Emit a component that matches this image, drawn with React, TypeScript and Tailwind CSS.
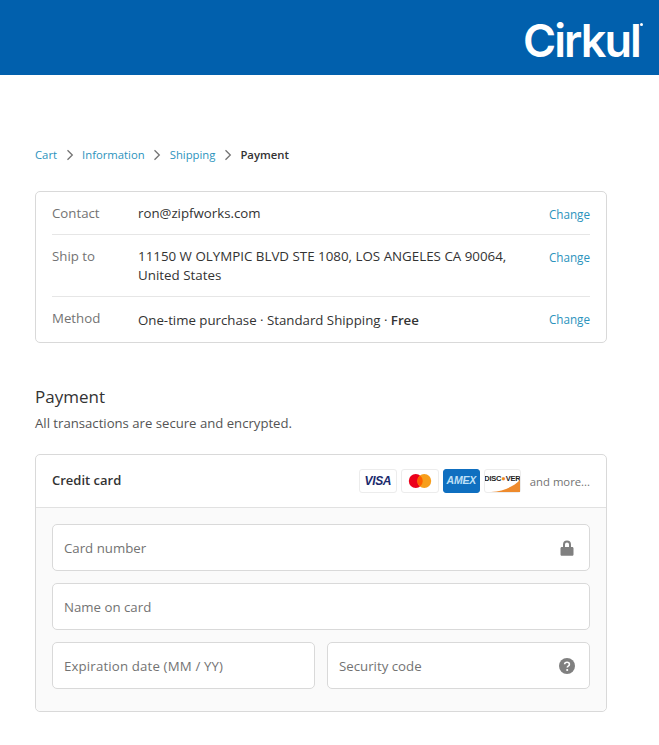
import React from "react";

function Chevron() {
  return (
    <svg width="10" height="12" viewBox="0 0 10 12" className="mx-[7.5px] shrink-0 text-[#737373]" fill="none" stroke="currentColor" strokeWidth="1.3">
      <path d="M2.5 1.2 7.3 6 2.5 10.8" />
    </svg>
  );
}

function Row({ label, children, className = "", labelClass = "", linkClass = "" }: { label: string; children: React.ReactNode; className?: string; labelClass?: string; linkClass?: string }) {
  return (
    <div className={`flex items-start ${className}`}>
      <div className={`w-[86px] shrink-0 leading-[19px] text-[#737373] ${labelClass}`}>{label}</div>
      <div className="flex-1 leading-[19px] text-[#333333]">{children}</div>
      <a className={`ml-3 text-[11.7px] leading-[19px] text-[#2b93bd] ${linkClass}`}>Change</a>
    </div>
  );
}

function Field({ label, icon, className = "", labelClass = "" }: { label: string; icon?: React.ReactNode; className?: string; labelClass?: string }) {
  return (
    <div className={`flex h-[47px] items-center justify-between rounded-[5px] border border-[#d9d9d9] bg-white pl-[11px] pr-[14px] text-[#737373] ${className}`}>
      <span className={`pt-[2px] ${labelClass}`}>{label}</span>
      {icon}
    </div>
  );
}

function Badge({ className = "", children }: { className?: string; children: React.ReactNode }) {
  return <div className={`flex h-6 w-[38px] items-center justify-center overflow-hidden rounded-[3px] border border-[#ececec] bg-white ${className}`}>{children}</div>;
}

export default function App() {
  return (
    <div className="h-[745px] w-[659px] overflow-hidden bg-white text-[13.25px] font-['Open_Sans','Noto_Sans',sans-serif] text-[#333333]">
      <header className="flex h-[75px] items-center justify-end bg-[#0160ad] pr-[19px] pt-[6px]">
        <span className="relative font-['Inter',sans-serif] text-[45px] font-semibold leading-none tracking-[-1.9px] text-white">
          Cirkul
          <span className="absolute right-[-3px] top-[5px] h-[3px] w-[3px] rounded-full bg-white" />
        </span>
      </header>

      <main className="ml-[35px] w-[572px]">
        <nav className="mt-[72px] flex h-4 items-center text-[11.3px]">
          <a className="text-[#2b93bd]">Cart</a>
          <Chevron />
          <a className="text-[#2b93bd]">Information</a>
          <Chevron />
          <a className="text-[#2b93bd]">Shipping</a>
          <Chevron />
          <span className="font-semibold text-[#333333]">Payment</span>
        </nav>

        <section className="mt-[28px] rounded-[5px] border border-[#d9d9d9] px-4">
          <Row label="Contact" className="h-[42px] pt-[12px]" linkClass="mt-[1px]">ron@zipfworks.com</Row>
          <Row label="Ship to" className="h-[62px] border-t border-[#e6e6e6] pt-[12px]" linkClass="mt-[1px]">
            <span className="text-[13.35px]">
              11150 W OLYMPIC BLVD STE 1080, LOS ANGELES CA 90064,
              <br />
              United States
            </span>
          </Row>
          <Row label="Method" className="h-[46px] border-t border-[#e6e6e6] pt-[14px]" labelClass="-mt-[2px]" linkClass="-mt-[1px]">
            One-time purchase · Standard Shipping · <b className="font-semibold">Free</b>
          </Row>
        </section>

        <h2 className="mt-[42px] text-[17px] leading-[24px] text-[#333333]">Payment</h2>
        <p className="mt-[5px] text-[13.15px] leading-[18px] text-[#545454]">All transactions are secure and encrypted.</p>

        <section className="mt-[22px] rounded-[5px] border border-[#d9d9d9]">
          <div className="flex h-[52px] items-center justify-between px-4">
            <span className="text-[13px] font-semibold text-[#333333]">Credit card</span>
            <div className="flex items-center gap-[4px]">
              <Badge>
                <span className="font-['Liberation_Sans',sans-serif] text-[12px] font-bold italic tracking-[-0.3px] text-[#1a2a6c]">VISA</span>
              </Badge>
              <Badge>
                <svg width="26" height="16" viewBox="0 0 24 15">
                  <circle cx="8" cy="7.5" r="6.5" fill="#eb001b" />
                  <circle cx="16" cy="7.5" r="6.5" fill="#f79e1b" />
                  <path d="M12 2.3a6.5 6.5 0 0 1 0 10.4 6.5 6.5 0 0 1 0-10.4z" fill="#ff5f00" />
                </svg>
              </Badge>
              <Badge className="!w-[37px] !border-[#0f6fc0] !bg-[#0f6fc0]">
                <span className="font-['Liberation_Sans',sans-serif] text-[10.5px] font-bold italic tracking-[-0.2px] text-[#bfe0f7]">AMEX</span>
              </Badge>
              <div className="relative">
                <Badge className="!w-[37px] !items-start">
                  <span className="mt-[3px] whitespace-nowrap font-['Liberation_Sans',sans-serif] text-[7.5px] font-bold tracking-[-0.2px] text-[#222222]">
                    DISC<span className="text-[#f08a1d]">●</span>VER
                  </span>
                </Badge>
                <svg className="absolute bottom-[1px] right-[1px]" width="35" height="12" viewBox="0 0 35 12">
                  <path d="M35 0v12H6C20 11 29 6 35 0z" fill="#ee8a2c" />
                </svg>
              </div>
              <span className="ml-[5px] mt-[2px] text-[11.3px] text-[#737373]">and more...</span>
            </div>
          </div>
          <div className="flex flex-col gap-3 rounded-b-[5px] border-t border-[#e1e1e1] bg-[#fafafa] px-4 pb-[22px] pt-4">
            <Field
              label="Card number"
              icon={
                <svg width="14" height="16" viewBox="0 0 14 16" fill="#808080" className="mr-px">
                  <path d="M3 7V4.500a4 4 0 0 1 8 0V7h1.200c.7 0 1.300.6 1.300 1.300v6.200c0 .7-.6 1.300-1.300 1.300H1.800C1.100 15.800.5 15.200.5 14.500V8.300C.5 7.600 1.100 7 1.800 7H3zm2 0h4V4.500a2 2 0 0 0-4 0V7z" />
                </svg>
              }
            />
            <Field label="Name on card" />
            <div className="flex gap-3">
              <Field label="Expiration date (MM / YY)" labelClass="tracking-[0.15px]" className="flex-1" />
              <Field
                label="Security code"
                className="flex-1"
                icon={
                  <svg width="16" height="16" viewBox="0 0 16 16">
                    <circle cx="8" cy="8" r="8" fill="#808080" />
                    <path d="M5.600 6.200C5.700 4.900 6.700 4.200 8 4.200c1.400 0 2.400.8 2.400 2 0 1-.6 1.500-1.200 1.900-.6.4-.9.7-.9 1.300" fill="none" stroke="#fff" strokeWidth="1.600" />
                    <circle cx="8.200" cy="12" r="1.050" fill="#fff" />
                  </svg>
                }
              />
            </div>
          </div>
        </section>
      </main>
    </div>
  );
}
